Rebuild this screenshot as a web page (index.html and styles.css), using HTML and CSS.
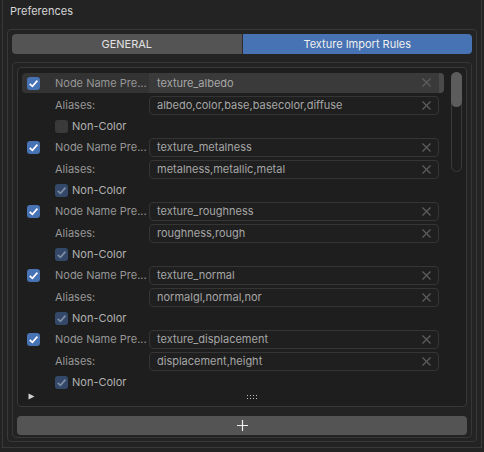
FILE: index.html
```html
<!DOCTYPE html>
<html lang="en">
<head>
    <meta charset="UTF-8">
    <title>Preferences</title>
    <link rel="stylesheet" href="styles.css">
</head>
<body>
<div class="frame">
    <div class="title">Preferences</div>

    <div class="panel">
        <!-- Tabs -->
        <div class="tabs">
            <div class="tab">GENERAL</div>
            <div class="tab active">Texture Import Rules</div>
        </div>

        <div class="box">
            <div class="list">
                <div class="list-body">
                    <div class="items">
                        <div class="item">
                            <div class="row head selected">
                                <span class="check on"><svg viewBox="0 0 12 12"><path d="M2.5 6.3 L5 8.6 L9.6 3.4"/></svg></span>
                                <span class="label">Node Name Pre...</span>
                                <div class="field">texture_albedo<svg class="clear" viewBox="0 0 9 9"><path d="M0.5 0.5 L8.5 8.5 M8.5 0.5 L0.5 8.5"/></svg></div>
                                <span class="grab"></span>
                            </div>
                            <div class="row">
                                <span></span>
                                <span class="label">Aliases:</span>
                                <div class="field">albedo,color,base,basecolor,diffuse<svg class="clear" viewBox="0 0 9 9"><path d="M0.5 0.5 L8.5 8.5 M8.5 0.5 L0.5 8.5"/></svg></div>
                            </div>
                            <div class="row option">
                                <span></span>
                                <span class="check small"></span>
                                <span class="opt-text">Non-Color</span>
                            </div>
                        </div>

                        <div class="item">
                            <div class="row head">
                                <span class="check on"><svg viewBox="0 0 12 12"><path d="M2.5 6.3 L5 8.6 L9.6 3.4"/></svg></span>
                                <span class="label">Node Name Pre...</span>
                                <div class="field">texture_metalness<svg class="clear" viewBox="0 0 9 9"><path d="M0.5 0.5 L8.5 8.5 M8.5 0.5 L0.5 8.5"/></svg></div>
                            </div>
                            <div class="row">
                                <span></span>
                                <span class="label">Aliases:</span>
                                <div class="field">metalness,metallic,metal<svg class="clear" viewBox="0 0 9 9"><path d="M0.5 0.5 L8.5 8.5 M8.5 0.5 L0.5 8.5"/></svg></div>
                            </div>
                            <div class="row option">
                                <span></span>
                                <span class="check small dim"><svg viewBox="0 0 12 12"><path d="M2.5 6.3 L5 8.6 L9.6 3.4"/></svg></span>
                                <span class="opt-text">Non-Color</span>
                            </div>
                        </div>

                        <div class="item">
                            <div class="row head">
                                <span class="check on"><svg viewBox="0 0 12 12"><path d="M2.5 6.3 L5 8.6 L9.6 3.4"/></svg></span>
                                <span class="label">Node Name Pre...</span>
                                <div class="field">texture_roughness<svg class="clear" viewBox="0 0 9 9"><path d="M0.5 0.5 L8.5 8.5 M8.5 0.5 L0.5 8.5"/></svg></div>
                            </div>
                            <div class="row">
                                <span></span>
                                <span class="label">Aliases:</span>
                                <div class="field">roughness,rough<svg class="clear" viewBox="0 0 9 9"><path d="M0.5 0.5 L8.5 8.5 M8.5 0.5 L0.5 8.5"/></svg></div>
                            </div>
                            <div class="row option">
                                <span></span>
                                <span class="check small dim"><svg viewBox="0 0 12 12"><path d="M2.5 6.3 L5 8.6 L9.6 3.4"/></svg></span>
                                <span class="opt-text">Non-Color</span>
                            </div>
                        </div>

                        <div class="item">
                            <div class="row head">
                                <span class="check on"><svg viewBox="0 0 12 12"><path d="M2.5 6.3 L5 8.6 L9.6 3.4"/></svg></span>
                                <span class="label">Node Name Pre...</span>
                                <div class="field">texture_normal<svg class="clear" viewBox="0 0 9 9"><path d="M0.5 0.5 L8.5 8.5 M8.5 0.5 L0.5 8.5"/></svg></div>
                            </div>
                            <div class="row">
                                <span></span>
                                <span class="label">Aliases:</span>
                                <div class="field">normalgl,normal,nor<svg class="clear" viewBox="0 0 9 9"><path d="M0.5 0.5 L8.5 8.5 M8.5 0.5 L0.5 8.5"/></svg></div>
                            </div>
                            <div class="row option">
                                <span></span>
                                <span class="check small dim"><svg viewBox="0 0 12 12"><path d="M2.5 6.3 L5 8.6 L9.6 3.4"/></svg></span>
                                <span class="opt-text">Non-Color</span>
                            </div>
                        </div>

                        <div class="item">
                            <div class="row head">
                                <span class="check on"><svg viewBox="0 0 12 12"><path d="M2.5 6.3 L5 8.6 L9.6 3.4"/></svg></span>
                                <span class="label">Node Name Pre...</span>
                                <div class="field">texture_displacement<svg class="clear" viewBox="0 0 9 9"><path d="M0.5 0.5 L8.5 8.5 M8.5 0.5 L0.5 8.5"/></svg></div>
                            </div>
                            <div class="row">
                                <span></span>
                                <span class="label">Aliases:</span>
                                <div class="field">displacement,height<svg class="clear" viewBox="0 0 9 9"><path d="M0.5 0.5 L8.5 8.5 M8.5 0.5 L0.5 8.5"/></svg></div>
                            </div>
                            <div class="row option">
                                <span></span>
                                <span class="check small dim"><svg viewBox="0 0 12 12"><path d="M2.5 6.3 L5 8.6 L9.6 3.4"/></svg></span>
                                <span class="opt-text">Non-Color</span>
                            </div>
                        </div>
                    </div>

                    <div class="scrollbar"><div class="thumb"></div></div>
                </div>

                <!-- list footer -->
                <div class="list-foot">
                    <svg class="expand" viewBox="0 0 7 7"><path d="M0.5 0.5 L6.5 3.5 L0.5 6.5 Z"/></svg>
                    <svg class="grip" viewBox="0 0 11 5"><path d="M0 0h1v1h-1z M3 0h1v1h-1z M6 0h1v1h-1z M9 0h1v1h-1z M0 3h1v1h-1z M3 3h1v1h-1z M6 3h1v1h-1z M9 3h1v1h-1z"/></svg>
                </div>
            </div>

            <button class="add"><svg viewBox="0 0 11 11"><path d="M5.5 0 V11 M0 5.5 H11"/></svg></button>
        </div>
    </div>
</div>
</body>
</html>
```

FILE: styles.css
```css
body {
    margin: 0;
    background-color: #232323;
    font-family: Inter, "Noto Sans", sans-serif;
    font-size: 11px;
    color: #a8a8a8;
    width: 484px;
    height: 452px;
    overflow: hidden;
}

.frame {
    margin: 0 2px;
    height: 448px;
    box-sizing: border-box;
    border: 1px solid #383838;
    border-top: none;
    padding: 0 4px;
}

.title {
    height: 29px;
    box-sizing: border-box;
    padding: 4px 0 0 3px;
    line-height: 14px;
    color: #d6d6d6;
}

.panel {
    border: 1px solid #393939;
    border-radius: 4px;
    padding: 4px 4px 3px;
}

.tabs {
    display: flex;
    height: 20px;
    border-radius: 4px;
    overflow: hidden;
}

.tab {
    flex: 1;
    background-color: #545454;
    color: #e2e2e2;
    line-height: 20px;
    text-align: center;
}

.tab.active {
    background-color: #4772b3;
    color: #f0f0f0;
    border-left: 1px solid #2c2c2c;
}

.box {
    margin-top: 8px;
    border: 1px solid #363636;
    border-radius: 4px;
    padding: 4px 4px 2px;
}

.list {
    border: 1px solid #383838;
    border-radius: 4px;
    background-color: #1e1e1e;
    padding: 5px 4px 0;
}

.list-body {
    display: flex;
    gap: 7px;
}

.items {
    flex: 1;
    display: flex;
    flex-direction: column;
    gap: 2px;
}

.item {
    display: flex;
    flex-direction: column;
    gap: 2px;
}

.row {
    display: grid;
    grid-template-columns: 33px 94px 1fr;
    align-items: center;
    height: 20px;
    padding-right: 5px;
}

.row.option {
    grid-template-columns: 33px 17px 1fr;
    height: 18px;
}

.row.head.selected {
    background-color: #333333;
    border-radius: 4px;
    padding-right: 0;
    grid-template-columns: 33px 94px 1fr 5px;
}

.label {
    color: #969696;
    white-space: nowrap;
}

.opt-text {
    color: #b0b0b0;
}

.check {
    width: 13px;
    height: 13px;
    box-sizing: border-box;
    border-radius: 3px;
    margin-left: 5px;
    background-color: #3a3a3a;
    display: flex;
}

.check.small {
    margin-left: 0;
}

.check svg {
    width: 13px;
    height: 13px;
    fill: none;
    stroke-width: 1.6;
}

.check.on {
    background-color: #4772b3;
}

.check.on svg {
    stroke: #ffffff;
}

.check.dim {
    background-color: #34496a;
}

.check.dim svg {
    stroke: #7e8ca3;
}

.field {
    position: relative;
    height: 19px;
    box-sizing: border-box;
    border: 1px solid #353535;
    border-radius: 4px;
    background-color: #1f1f1f;
    padding-left: 7px;
    line-height: 17px;
    color: #a6a6a6;
}

.selected .field {
    background-color: #3a3a3a;
    border-color: #3a3a3a;
    border-radius: 0;
    height: 20px;
    line-height: 18px;
}

.grab {
    height: 20px;
    background-color: #4a4a4a;
    border-radius: 0 4px 4px 0;
}

.clear {
    position: absolute;
    right: 7px;
    top: 4px;
    width: 9px;
    height: 9px;
    stroke: #5e5e5e;
    stroke-width: 1.2;
}

.scrollbar {
    width: 11px;
    height: 100px;
    margin-top: -1px;
    box-sizing: border-box;
    border: 1px solid #3a3a3a;
    border-radius: 6px;
}

.thumb {
    height: 35px;
    margin: -1px;
    border-radius: 6px;
    background-color: #5c5c5c;
}

.list-foot {
    position: relative;
    height: 15px;
}

.expand {
    position: absolute;
    left: 6px;
    top: 2px;
    width: 7px;
    height: 7px;
    fill: #d2d2d2;
}

.grip {
    position: absolute;
    left: 225px;
    top: 4px;
    width: 11px;
    height: 5px;
    fill: #c0c0c0;
}

.add {
    display: flex;
    align-items: center;
    justify-content: center;
    width: 100%;
    height: 19px;
    margin-top: 9px;
    border: none;
    border-radius: 4px;
    background-color: #545454;
    cursor: pointer;
}

.add svg {
    width: 11px;
    height: 11px;
    stroke: #f0f0f0;
    stroke-width: 1.2;
}
```
